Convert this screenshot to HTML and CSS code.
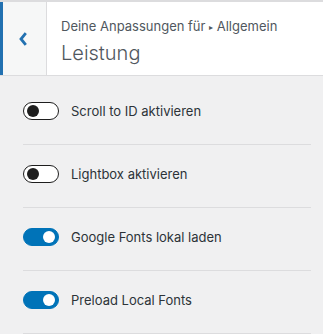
FILE: index.html
```
<!DOCTYPE html>
<html lang="de">
<head>
<meta charset="utf-8">
<link rel="stylesheet" href="styles.css">
</head>
<body>
<div class="header">
  <div class="back">
    <svg width="10" height="16" viewBox="0 0 10 16"><path d="M7.8 2.2 L3 8 L7.8 13.8" fill="none" stroke="#2271b1" stroke-width="2.8" stroke-linejoin="miter"/></svg>
  </div>
  <div class="titles">
    <div class="crumb">Deine Anpassungen für <span class="arrow">▸</span> Allgemein</div>
    <div class="title">Leistung</div>
  </div>
</div>
<ul class="list">
  <li class="row"><span class="toggle"></span><span class="label">Scroll to ID aktivieren</span></li>
  <li class="row"><span class="toggle"></span><span class="label">Lightbox aktivieren</span></li>
  <li class="row"><span class="toggle on"></span><span class="label">Google Fonts lokal laden</span></li>
  <li class="row"><span class="toggle on"></span><span class="label">Preload Local Fonts</span></li>
</ul>
</body>
</html>
```
FILE: styles.css
```
html, body { margin: 0; padding: 0; }
body {
  background: #f0f0f1;
  font-family: Inter, "Noto Sans", sans-serif;
  color: #3c434a;
  width: 323px;
  height: 334px;
  overflow: hidden;
}
.header {
  display: flex;
  height: 73px;
  background: #fff;
  border-top: 2px solid #dcdcde;
  border-bottom: 1px solid #dcdcde;
}
.back {
  box-sizing: content-box;
  width: 39px;
  padding-right: 4px;
  border-left: 3px solid #2271b1;
  border-right: 1px solid #dcdcde;
  background: #f6f7f7;
  display: flex;
  align-items: center;
  justify-content: center;
}
.titles {
  padding-left: 14px;
  padding-top: 15px;
}
.crumb {
  font-size: 13px;
  line-height: 18px;
  color: #50575e;
}
.arrow { font-size: 8px; position: relative; top: -1px; }
.title {
  font-size: 20px;
  font-weight: 300;
  line-height: 26px;
  margin-top: 3px;
  color: #50575e;
}
.list {
  list-style: none;
  margin: 0;
  padding: 6px 12px 0 23px;
}
.row {
  display: flex;
  align-items: center;
  gap: 12px;
  padding: 20px 0 24px;
  border-bottom: 1px solid #dcdcde;
}
.toggle {
  box-sizing: border-box;
  width: 36px;
  height: 18px;
  border: 1px solid #1e1e1e;
  border-radius: 9px;
  background: #fff;
  position: relative;
  flex: none;
}
.toggle::after {
  content: "";
  position: absolute;
  left: 3px;
  top: 2px;
  width: 12px;
  height: 12px;
  border-radius: 50%;
  background: #1e1e1e;
}
.toggle.on {
  background: #0073b8;
  border-color: #0073b8;
}
.toggle.on::after {
  left: auto;
  right: 3px;
  background: #fff;
}
.label {
  font-size: 13px;
  line-height: 18px;
  color: #2c3338;
}
```
